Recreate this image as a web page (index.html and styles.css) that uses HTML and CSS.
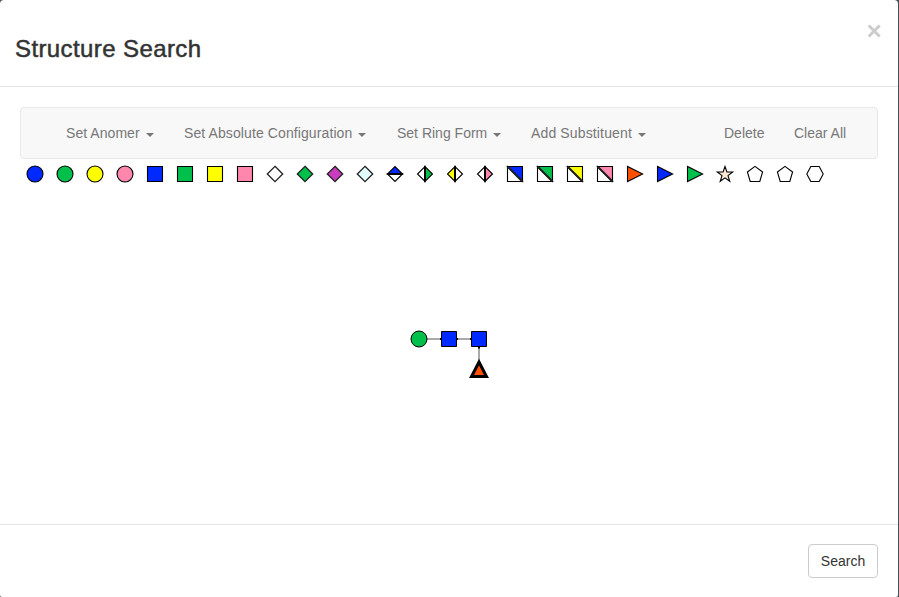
FILE: index.html
```html
<!DOCTYPE html>
<html lang="en">
<head>
<meta charset="utf-8">
<title>Structure Search</title>
<link rel="stylesheet" href="styles.css">
</head>
<body>
<div class="modal">
  <header class="modal-header">
    <h3 class="title">Structure Search</h3>
    <button class="close" aria-label="Close"><svg width="14" height="14" viewBox="0 0 14 14"><path d="M1.7 1.5L12.7 12.5M12.7 1.5L1.7 12.5"/></svg></button>
  </header>
  <main class="modal-body">
    <nav class="toolbar">
      <a class="item anomer"><span>Set Anomer</span><i class="caret"></i></a>
      <a class="item config"><span>Set Absolute Configuration</span><i class="caret"></i></a>
      <a class="item ring"><span>Set Ring Form</span><i class="caret"></i></a>
      <a class="item subst"><span>Add Substituent</span><i class="caret"></i></a>
      <a class="item delete"><span>Delete</span></a>
      <a class="item clear"><span>Clear All</span></a>
    </nav>
    <div class="palette">
      <svg class="sugar blue" viewBox="-15 -15 30 30"><circle r="8"/></svg>
      <svg class="sugar green" viewBox="-15 -15 30 30"><circle r="8"/></svg>
      <svg class="sugar yellow" viewBox="-15 -15 30 30"><circle r="8"/></svg>
      <svg class="sugar pink" viewBox="-15 -15 30 30"><circle r="8"/></svg>
      <svg class="sugar blue" viewBox="-15 -15 30 30"><path d="M-7.5-7.5h15v15h-15z"/></svg>
      <svg class="sugar green" viewBox="-15 -15 30 30"><path d="M-7.5-7.5h15v15h-15z"/></svg>
      <svg class="sugar yellow" viewBox="-15 -15 30 30"><path d="M-7.5-7.5h15v15h-15z"/></svg>
      <svg class="sugar pink" viewBox="-15 -15 30 30"><path d="M-7.5-7.5h15v15h-15z"/></svg>
      <svg class="sugar white" viewBox="-15 -15 30 30"><path class="soft" d="M0-7.7L7.7 0 0 7.7-7.7 0z"/></svg>
      <svg class="sugar green" viewBox="-15 -15 30 30"><path class="soft" d="M0-7.7L7.7 0 0 7.7-7.7 0z"/></svg>
      <svg class="sugar purple" viewBox="-15 -15 30 30"><path class="soft" d="M0-7.7L7.7 0 0 7.7-7.7 0z"/></svg>
      <svg class="sugar ice" viewBox="-15 -15 30 30"><path class="soft" d="M0-7.7L7.7 0 0 7.7-7.7 0z"/></svg>
      <svg class="sugar blue" viewBox="-15 -15 30 30"><path class="blank" d="M-7.5 0H7.5L0 7.5z"/><path d="M-7.5 0H7.5L0-7.5z"/><path class="bar" d="M-7.5 0H7.5"/></svg>
      <svg class="sugar green" viewBox="-15 -15 30 30"><path class="blank" d="M0-7.5V7.5L-7.5 0z"/><path d="M0-7.5V7.5L7.5 0z"/><path class="bar" d="M0-7.5V7.5"/></svg>
      <svg class="sugar yellow" viewBox="-15 -15 30 30"><path class="blank" d="M0-7.5V7.5L7.5 0z"/><path d="M0-7.5V7.5L-7.5 0z"/><path class="bar" d="M0-7.5V7.5"/></svg>
      <svg class="sugar pink" viewBox="-15 -15 30 30"><path class="blank" d="M0-7.5V7.5L-7.5 0z"/><path d="M0-7.5V7.5L7.5 0z"/><path class="bar" d="M0-7.5V7.5"/></svg>
      <svg class="sugar blue" viewBox="-15 -15 30 30"><path class="blank" d="M-7.5-7.5v15h15z"/><path d="M-7.5-7.5h15v15z"/><path class="slash" d="M-7.5-7.5l15 15"/></svg>
      <svg class="sugar green" viewBox="-15 -15 30 30"><path class="blank" d="M-7.5-7.5v15h15z"/><path d="M-7.5-7.5h15v15z"/><path class="slash" d="M-7.5-7.5l15 15"/></svg>
      <svg class="sugar yellow" viewBox="-15 -15 30 30"><path class="blank" d="M-7.5-7.5v15h15z"/><path d="M-7.5-7.5h15v15z"/><path class="slash" d="M-7.5-7.5l15 15"/></svg>
      <svg class="sugar pink" viewBox="-15 -15 30 30"><path class="blank" d="M-7.5-7.5v15h15z"/><path d="M-7.5-7.5h15v15z"/><path class="slash" d="M-7.5-7.5l15 15"/></svg>
      <svg class="sugar orange" viewBox="-15 -15 30 30"><path d="M-7.5-7.5V7.5L7.6 0z"/></svg>
      <svg class="sugar blue" viewBox="-15 -15 30 30"><path d="M-7.5-7.5V7.5L7.6 0z"/></svg>
      <svg class="sugar green" viewBox="-15 -15 30 30"><path d="M-7.5-7.5V7.5L7.6 0z"/></svg>
      <svg class="sugar cream" viewBox="-15 -15 30 30"><path d="M0-7.5L1.9-2H7.7L3 1.6 4.8 7.3 0 3.9-4.8 7.3-3 1.6-7.7-2H-1.9z"/></svg>
      <svg class="sugar white" viewBox="-15 -15 30 30"><path d="M0-7.6L7.6-2 4.8 7.5H-4.8L-7.6-2z"/></svg>
      <svg class="sugar white" viewBox="-15 -15 30 30"><path d="M0-7.6L7.6-2 4.8 7.5H-4.8L-7.6-2z"/></svg>
      <svg class="sugar white" viewBox="-15 -15 30 30"><path d="M-8.2 0L-4.2-7.5H4.2L8.2 0 4.2 7.5H-4.2z"/></svg>
    </div>
    <svg class="drawing" viewBox="20 189 858 315">
      <path class="bond" d="M427 339H441M457 339H471M479 347V360"/>
      <path class="joint" d="M440 339h2M456 339h2M470 339h2M479 346v2.5"/>
      <circle class="green" cx="419" cy="339" r="8"/>
      <path class="blue" d="M441.5 331.5h15v15h-15zM471.5 331.5h15v15h-15z"/>
      <path class="orange selected" d="M479 362L486.5 376.5H471.5z"/>
    </svg>
  </main>
  <footer class="modal-footer"><button class="search">Search</button></footer>
</div>
</body>
</html>
```

FILE: styles.css
```css
* { box-sizing: border-box; }
body {
  margin: 0;
  background: #465057;
  color: #333;
  font: 14px/20px "Liberation Sans", Arial, sans-serif;
}
.modal {
  display: flex;
  flex-direction: column;
  width: 898px;
  height: 597px;
  background: #fff;
  border-radius: 4px 4px 2px 2px;
}
.modal-header {
  display: flex;
  justify-content: space-between;
  height: 87px;
  padding: 15px;
  border-bottom: 1px solid #e5e5e5;
}
.title {
  margin: 20px 0 0;
  font-size: 24px;
  font-weight: 400;
  line-height: 28px;
  letter-spacing: .4px;
  -webkit-text-stroke: .5px #333;
}
.close {
  width: 14px;
  height: 14px;
  margin: 9px 2px 0 0;
  padding: 0;
  border: 0;
  background: none;
}
.close svg { display: block; fill: none; stroke: #ccc; stroke-width: 3; }
.modal-body { flex: 1; padding: 20px 20px 0; }
.toolbar {
  display: flex;
  align-items: center;
  height: 52px;
  padding-left: 45px;
  background: #f8f8f8;
  border: 1px solid #e7e7e7;
  border-radius: 4px;
  color: #777;
}
.item {
  display: flex;
  justify-content: space-between;
  align-items: center;
  white-space: nowrap;
}
.anomer { width: 88px; margin-right: 30px; letter-spacing: .05px; }
.config { width: 182px; margin-right: 31px; letter-spacing: .1px; }
.ring { width: 104px; margin-right: 30px; }
.subst { width: 115px; margin-right: 78px; letter-spacing: .14px; }
.delete { width: 40px; margin-right: 30px; }
.caret {
  margin-top: 3px;
  border-top: 4px solid #777;
  border-right: 4px solid transparent;
  border-left: 4px solid transparent;
}
.palette { display: flex; height: 30px; }
.sugar { width: 30px; height: 30px; stroke: #000; stroke-width: 1.1; }
.drawing { display: block; width: 858px; height: 315px; stroke: #000; }
.blue { fill: #0029ff; }
.green { fill: #00c04b; }
.yellow { fill: #ff0; }
.pink { fill: #ff87ad; }
.white, .blank { fill: #fff; }
.purple { fill: #c83cbe; }
.ice { fill: #e3fcff; }
.orange { fill: #ff5000; }
.cream { fill: #ffe9d5; }
.soft { stroke: #222; stroke-width: 1.3; }
.bar { stroke-width: 2; }
.slash { stroke: #222; stroke-width: 2; }
.bond { stroke: #aaa; stroke-width: 2; }
.joint { stroke-width: 2; }
.selected { stroke-width: 3; }
.modal-footer {
  display: flex;
  justify-content: flex-end;
  height: 73px;
  padding: 19px 20px;
  border-top: 1px solid #e5e5e5;
}
.search {
  width: 70px;
  height: 34px;
  padding: 0;
  border: 1px solid #ccc;
  border-radius: 4px;
  background: #fff;
  color: #333;
  font: inherit;
}
```
